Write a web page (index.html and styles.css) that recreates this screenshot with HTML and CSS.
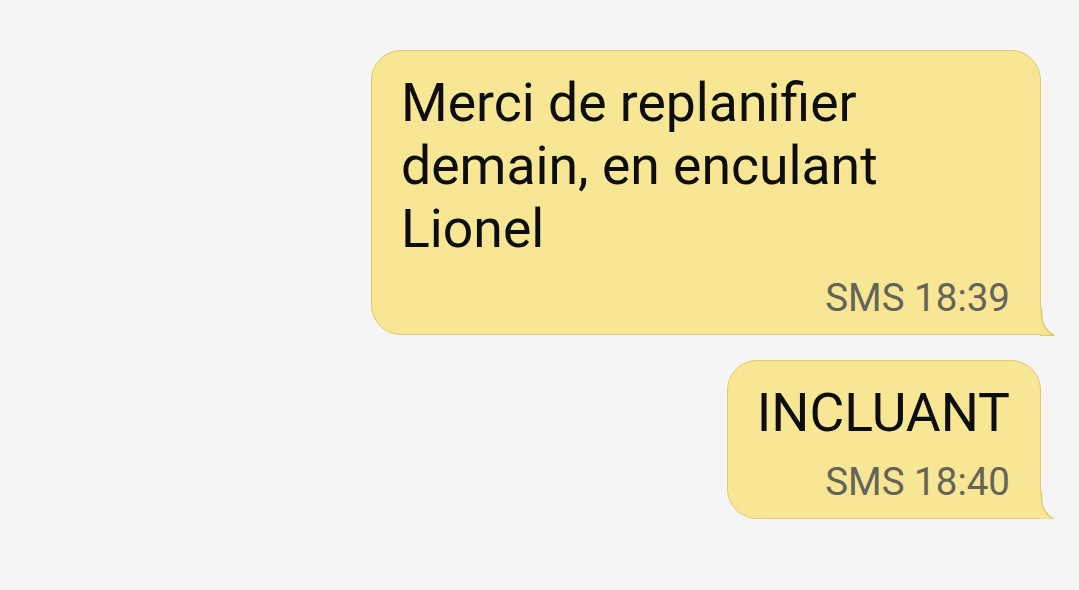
FILE: index.html
```html
<!DOCTYPE html>
<html lang="fr">
<head>
<meta charset="utf-8">
<link rel="stylesheet" href="styles.css">
</head>
<body>
<div class="thread">
  <div class="bubble">
    <p class="text">Merci de replanifier demain, en enculant Lionel</p>
    <p class="meta">SMS 18:39</p>
    <svg class="tail" width="16" height="28" viewBox="0 0 16 28"><path d="M0 0 H1.5 V6 C1.5 15 6 23 14.5 27.5 H0 Z" fill="#f7e794"/><path d="M1.5 0 V6 C1.5 15 6 23 14.5 27.5 H0" fill="none" stroke="#e2c96f" stroke-width="1.5"/></svg>
  </div>
  <div class="bubble">
    <p class="text">INCLUANT</p>
    <p class="meta">SMS 18:40</p>
    <svg class="tail" width="16" height="28" viewBox="0 0 16 28"><path d="M0 0 H1.5 V6 C1.5 15 6 23 14.5 27.5 H0 Z" fill="#f7e794"/><path d="M1.5 0 V6 C1.5 15 6 23 14.5 27.5 H0" fill="none" stroke="#e2c96f" stroke-width="1.5"/></svg>
  </div>
</div>
</body>
</html>
```

FILE: styles.css
```css
html, body {
  margin: 0;
  padding: 0;
  background: #f5f5f5;
}
body {
  font-family: Roboto, "Noto Sans", sans-serif;
}
.thread {
  display: flex;
  flex-direction: column;
  align-items: flex-end;
  gap: 25px;
  padding: 50px 38px 0 0;
}
.bubble {
  position: relative;
  max-width: 670px;
  box-sizing: border-box;
  background: #f7e794;
  border: 1.5px solid #e2c96f;
  border-radius: 30px 30px 0 30px;
  padding: 20px 30px 14px 29px;
  display: flex;
  flex-direction: column;
  align-items: flex-end;
}
.text {
  margin: 0;
  align-self: stretch;
  font-size: 53.5px;
  line-height: 63px;
  color: #0d0d0d;
}
.bubble:last-child .text {
  text-align: right;
}
.meta {
  margin: 16px 0 0;
  font-size: 38.5px;
  line-height: 44px;
  color: #65635a;
}
.tail {
  position: absolute;
  right: -15.5px;
  bottom: -1.5px;
}
```
